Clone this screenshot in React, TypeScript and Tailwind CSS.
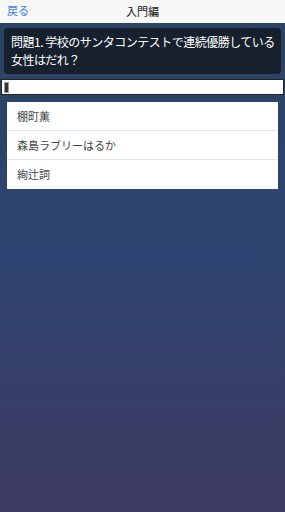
const choices = ['棚町薫', '森島ラブリーはるか', '絢辻詞'];

export default function App() {
    return (
        <div
            className="flex h-[512px] w-[285px] flex-col overflow-hidden bg-gradient-to-b from-[#2a4463] via-[#2e4470] to-[#3d3a62]"
            style={{ fontFamily: '"Noto Sans CJK JP", "Liberation Sans", sans-serif' }}
        >
            {/* Nav bar */}
            <div className="relative flex h-[23px] items-center justify-center bg-[#f7f7f7]">
                <span className="absolute left-[7px] top-[2px] text-[11px] text-[#3b82d6]">戻る</span>
                <span className="text-[11px] text-[#111]">入門編</span>
            </div>

            {/* Question */}
            <div className="mx-[4px] mt-[5px] whitespace-nowrap rounded-[4px] bg-[#17212e] px-[7px] pt-[5px] pb-[5px] text-[12px] leading-[18px] tracking-[-0.5px] text-white">
                問題1. 学校のサンタコンテストで連続優勝している
                <br />
                女性はだれ？
            </div>

            {/* Input */}
            <div className="mx-[1px] mt-[5px] flex h-[16px] items-center border border-[#222] bg-white px-[2px]">
                <div className="h-[11px] w-[5px] border border-[#999] bg-[#2b3640]" />
            </div>

            {/* Choices */}
            <div className="mx-[7px] mt-[7px] bg-white">
                {choices.map((c, i) => (
                    <div
                        key={c}
                        className={`flex h-[29px] items-center px-[10px] text-[11px] text-[#444] ${i < choices.length - 1 ? 'border-b border-[#e3e3e3]' : ''}`}
                    >
                        {c}
                    </div>
                ))}
            </div>
        </div>
    );
}
